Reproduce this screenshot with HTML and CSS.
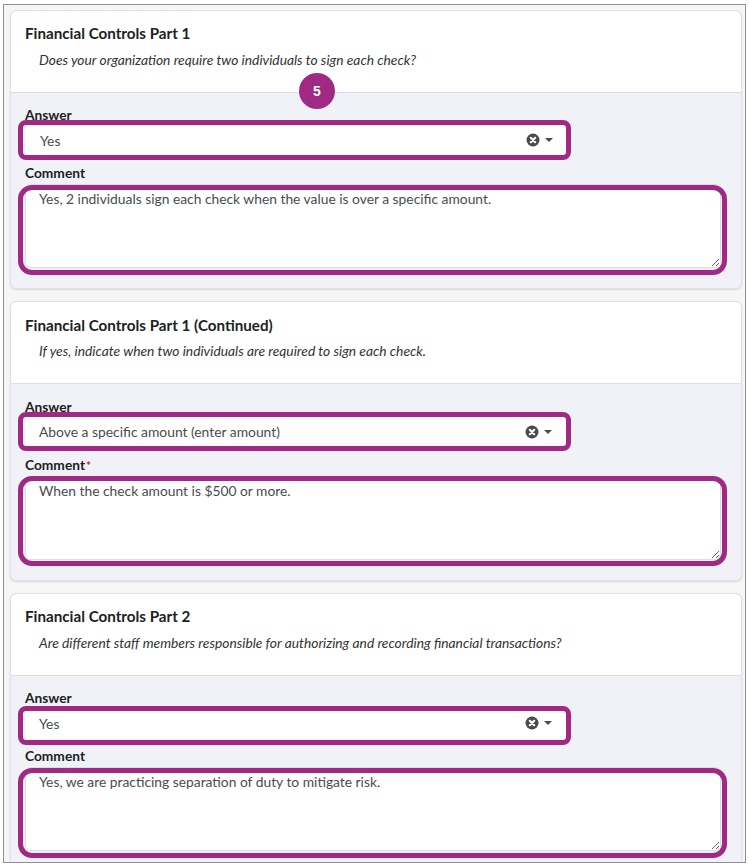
FILE: index.html
```html
<!DOCTYPE html>
<html lang="en">
<head>
<meta charset="utf-8">
<title>Financial Controls</title>
<link rel="stylesheet" href="styles.css">
</head>
<body>
<main class="frame">
  <section class="card card-one">
    <header class="card-head">
      <h2 class="card-title">Financial Controls Part 1</h2>
      <p class="question">Does your organization require two individuals to sign each check?</p>
    </header>
    <div class="card-body">
      <label class="field-label">Answer</label>
      <div class="select">
        <span class="select-value">Yes</span>
        <svg class="clear" viewBox="0 0 14 14" aria-hidden="true"><circle cx="7" cy="7" r="6.5" fill="#494c4e"/><path d="M4.8 4.8l4.4 4.4M9.2 4.8l-4.4 4.4" stroke="#fff" stroke-width="2.2" stroke-linecap="round"/></svg>
        <svg class="caret" viewBox="0 0 8 4" aria-hidden="true"><path d="M0 0h8L4 4z" fill="#494c4e"/></svg>
        <span class="mark mark-select"></span>
      </div>
      <label class="field-label comment-label">Comment</label>
      <div class="comment">
        <textarea class="comment-input" readonly>Yes, 2 individuals sign each check when the value is over a specific amount.</textarea>
        <span class="mark mark-comment"></span>
      </div>
    </div>
    <span class="step">5</span>
  </section>

  <section class="card card-two">
    <header class="card-head">
      <h2 class="card-title">Financial Controls Part 1 (Continued)</h2>
      <p class="question">If yes, indicate when two individuals are required to sign each check.</p>
    </header>
    <div class="card-body">
      <label class="field-label">Answer</label>
      <div class="select">
        <span class="select-value">Above a specific amount (enter amount)</span>
        <svg class="clear" viewBox="0 0 14 14" aria-hidden="true"><circle cx="7" cy="7" r="6.5" fill="#494c4e"/><path d="M4.8 4.8l4.4 4.4M9.2 4.8l-4.4 4.4" stroke="#fff" stroke-width="2.2" stroke-linecap="round"/></svg>
        <svg class="caret" viewBox="0 0 8 4" aria-hidden="true"><path d="M0 0h8L4 4z" fill="#494c4e"/></svg>
        <span class="mark mark-select"></span>
      </div>
      <label class="field-label comment-label">Comment<span class="required">*</span></label>
      <div class="comment">
        <textarea class="comment-input" readonly>When the check amount is $500 or more.</textarea>
        <span class="mark mark-comment"></span>
      </div>
    </div>
  </section>

  <section class="card card-three">
    <header class="card-head">
      <h2 class="card-title">Financial Controls Part 2</h2>
      <p class="question">Are different staff members responsible for authorizing and recording financial transactions?</p>
    </header>
    <div class="card-body">
      <label class="field-label">Answer</label>
      <div class="select">
        <span class="select-value">Yes</span>
        <svg class="clear" viewBox="0 0 14 14" aria-hidden="true"><circle cx="7" cy="7" r="6.5" fill="#494c4e"/><path d="M4.8 4.8l4.4 4.4M9.2 4.8l-4.4 4.4" stroke="#fff" stroke-width="2.2" stroke-linecap="round"/></svg>
        <svg class="caret" viewBox="0 0 8 4" aria-hidden="true"><path d="M0 0h8L4 4z" fill="#494c4e"/></svg>
        <span class="mark mark-select"></span>
      </div>
      <label class="field-label comment-label">Comment</label>
      <div class="comment">
        <textarea class="comment-input" readonly>Yes, we are practicing separation of duty to mitigate risk.</textarea>
        <span class="mark mark-comment"></span>
      </div>
    </div>
  </section>
</main>
</body>
</html>
```
FILE: styles.css
```css
html, body {
  margin: 0;
  padding: 0;
  background: #fff;
}
body {
  width: 749px;
  height: 865px;
  overflow: hidden;
  font-family: Lato, "Open Sans", sans-serif;
  color: #202122;
}
.frame {
  box-sizing: border-box;
  width: 743px;
  height: 859px;
  margin: 4px 0 0 3px;
  padding: 5px 3px 0 6px;
  display: flex;
  flex-direction: column;
  gap: 12px;
  overflow: hidden;
  background: #f6f6f6;
  border: 1px solid #8f8f8f;
}
.card {
  position: relative;
  flex: none;
  height: 279.4px;
  display: flex;
  flex-direction: column;
  box-sizing: border-box;
  background: #f1f2f8;
  border: 1px solid #e0e1e4;
  border-radius: 6px;
  box-shadow: 0 1px 2px rgba(0, 0, 0, 0.12);
}
.card-head {
  flex: none;
  box-sizing: border-box;
  height: 82px;
  padding: 13.3px 14px 0;
  background: #fff;
  border-bottom: 1px solid #dcdde0;
  border-radius: 6px 6px 0 0;
}
.card-title {
  margin: 0;
  font-size: 15.2px;
  line-height: 18px;
  font-weight: 700;
  color: #202122;
}
.question {
  margin: 8.7px 0 0 14px;
  font-size: 13.8px;
  line-height: 18px;
  font-style: italic;
  color: #333;
}
.card-body {
  flex: 1;
  padding: 14.3px 20px 0 14px;
}
.field-label {
  display: block;
  font-size: 13.75px;
  line-height: 16px;
  font-weight: 700;
  color: #202122;
}
.select {
  position: relative;
  display: flex;
  align-items: center;
  box-sizing: border-box;
  width: 542px;
  height: 30px;
  margin-top: 2.7px;
  padding: 0 15px 1px 14px;
  background: #fff;
  border-radius: 4px;
  font-size: 13.85px;
}
.card-one .select {
  padding: 0 14px 1px 15px;
}
.select-value {
  flex: 1;
  color: #494c4e;
}
.clear {
  width: 14px;
  height: 14px;
}
.caret {
  width: 8px;
  height: 4px;
  margin-left: 5px;
}
.comment-label {
  margin-top: 9.3px;
}
.required {
  margin-left: 1px;
  font-size: 12px;
  color: #cd2026;
}
.comment {
  position: relative;
  height: 84px;
  margin-top: 2.7px;
}
.comment-input {
  display: block;
  box-sizing: border-box;
  width: 100%;
  height: 100%;
  padding: 5px 13px 0;
  border: 1px solid #dcdde0;
  border-radius: 6px;
  background: #fff;
  font-family: inherit;
  font-size: 13.82px;
  line-height: 18px;
  color: #494c4e;
  outline: none;
}
.mark {
  position: absolute;
  border: 5px solid #a02a83;
  pointer-events: none;
}
.mark-select {
  inset: -6px -4px -4px -7px;
  border-radius: 8px;
}
.card-two .mark-select {
  inset: -5px -4px -4px -7px;
}
.card-three .mark-select {
  inset: -3px -4px -6px -7px;
}
.mark-comment {
  inset: 1px -6px -7px -7px;
  border-radius: 14px;
}
.card-two .mark-comment {
  inset: 0 -6px -6px -7px;
}
.card-three .mark-comment {
  inset: 1px -6px -7px -7px;
}
.step {
  position: absolute;
  left: 288px;
  top: 62px;
  width: 36px;
  height: 36px;
  border-radius: 50%;
  background: #a02a83;
  color: #fff;
  font-family: "Liberation Sans", Arial, sans-serif;
  font-size: 14px;
  font-weight: 700;
  line-height: 36px;
  text-align: center;
}
```
